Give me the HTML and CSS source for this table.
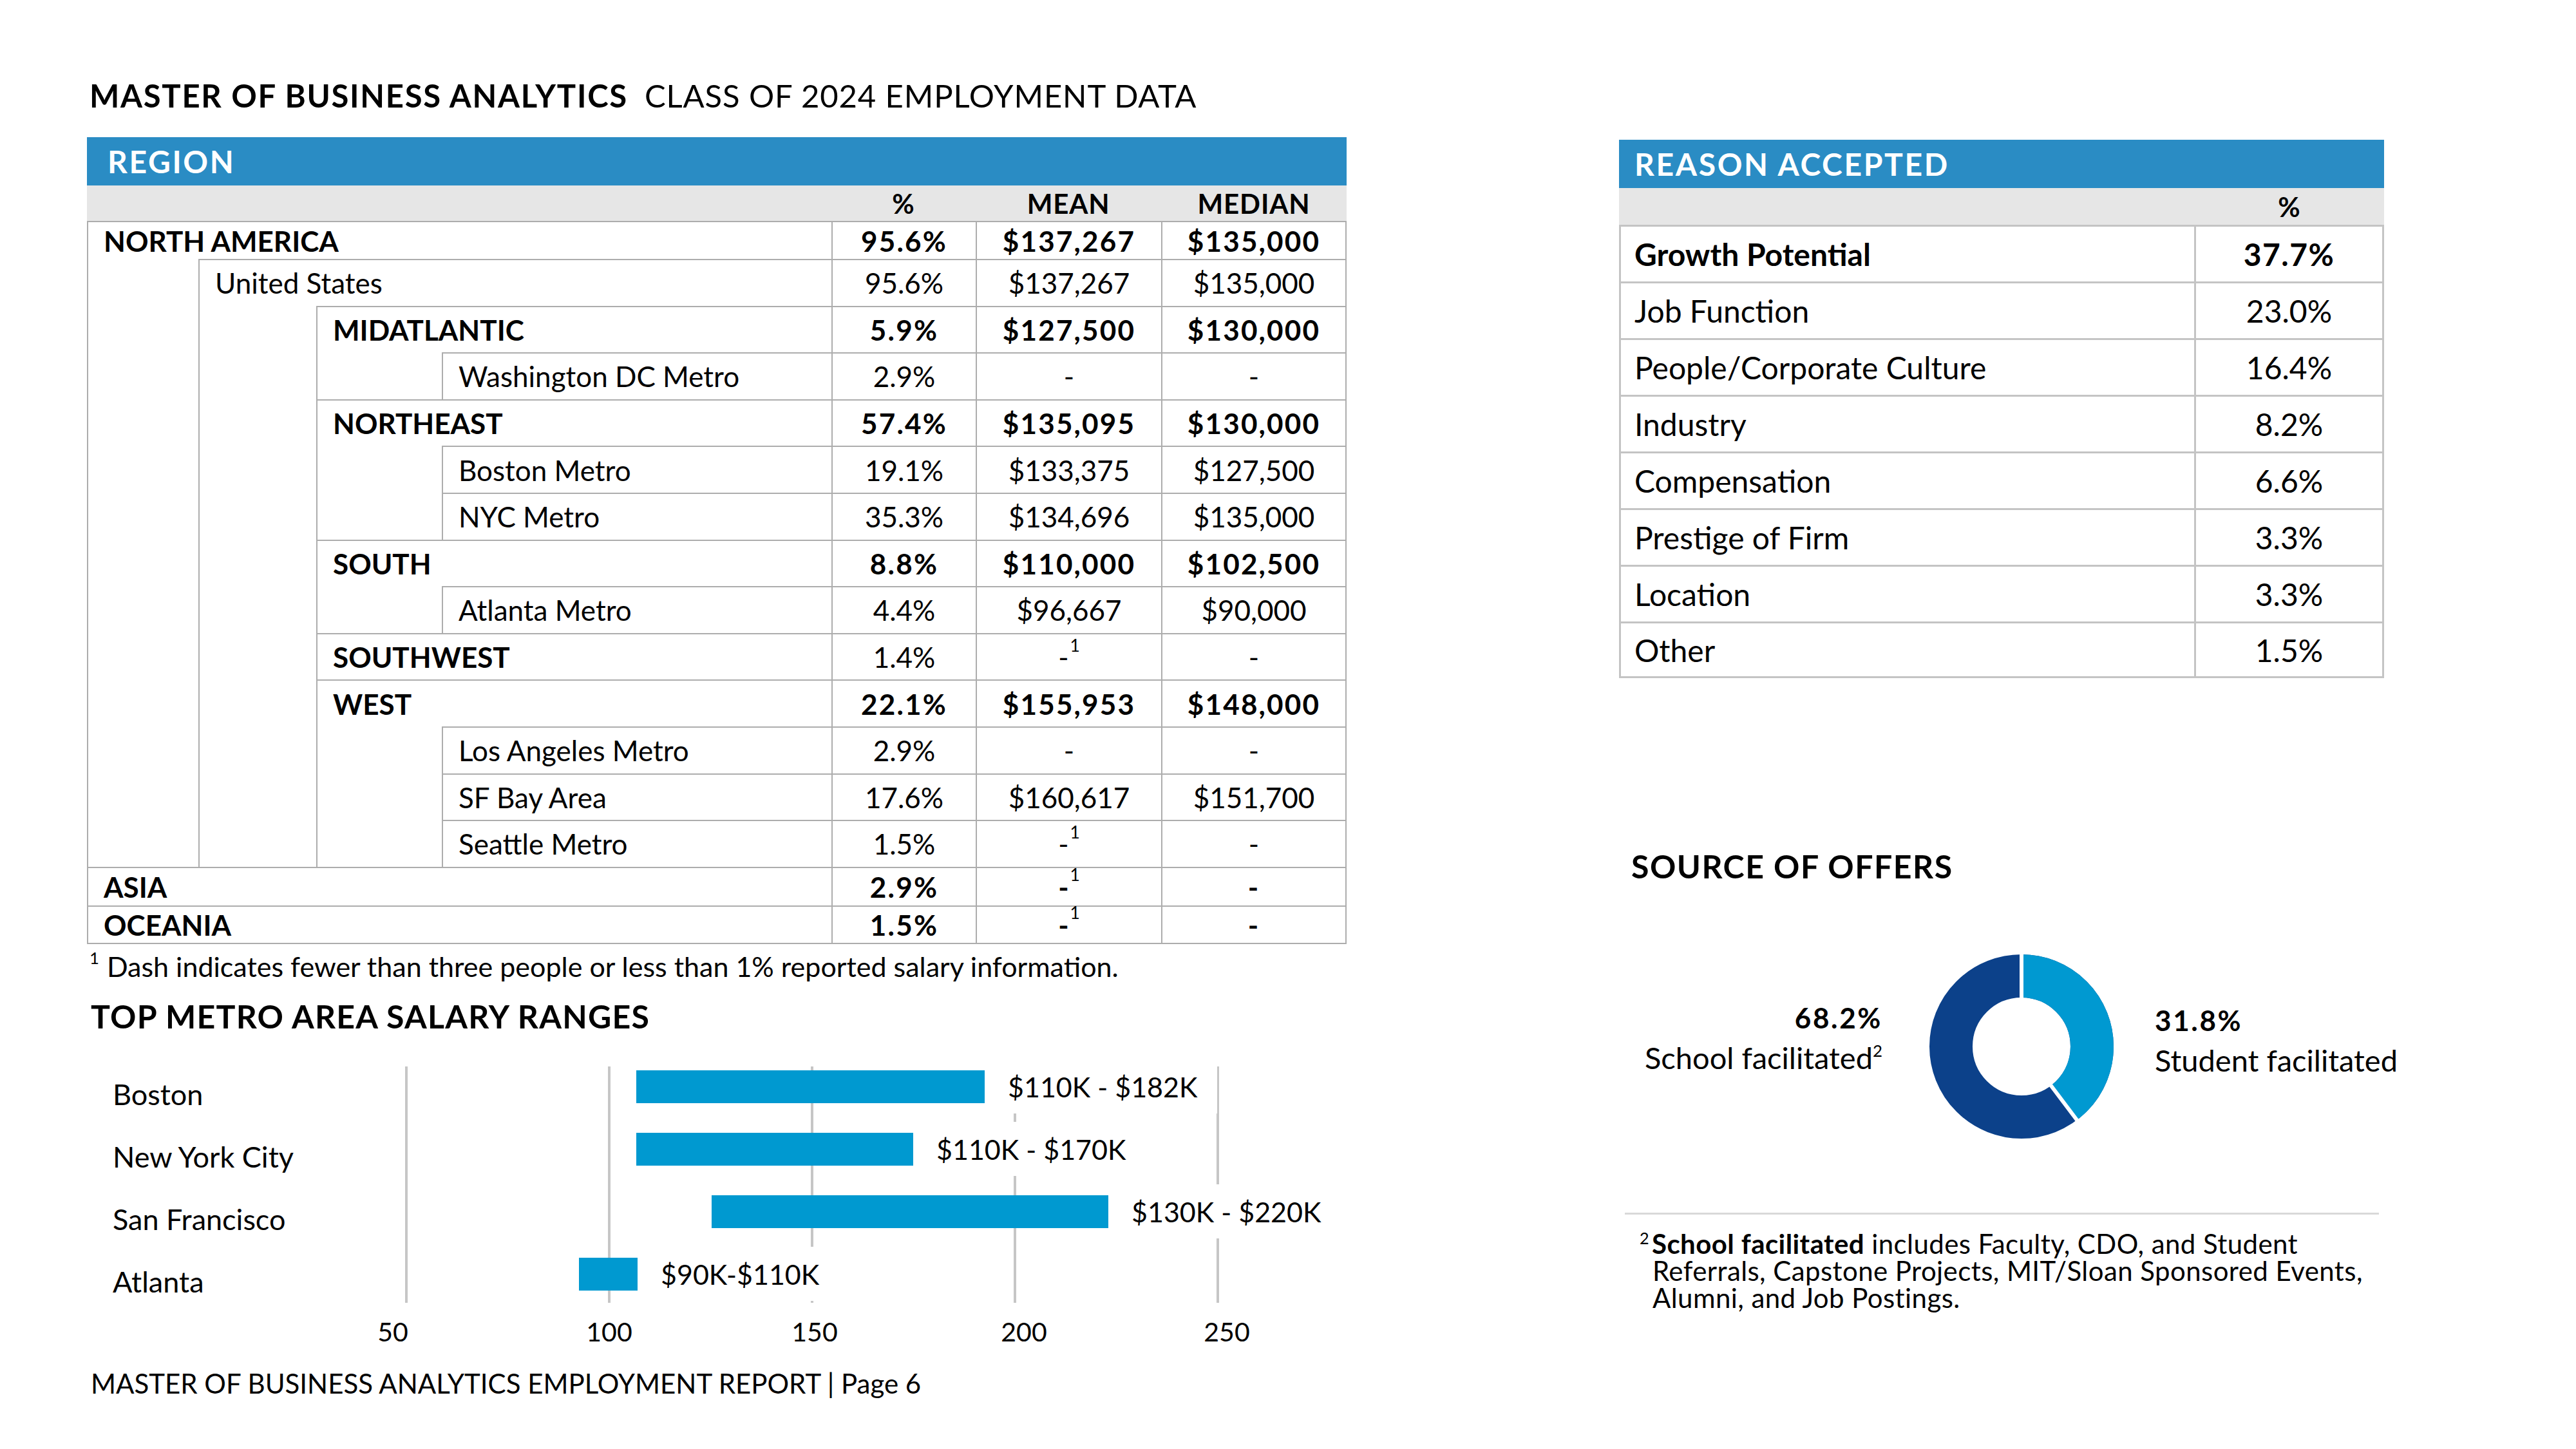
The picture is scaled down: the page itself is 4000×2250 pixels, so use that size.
FILE: index.html
```html
<!DOCTYPE html>
<html>
<head>
<meta charset="utf-8">
<link rel="stylesheet" href="styles.css">
</head>
<body>
<div class="page">
  <div class="col-left">
    <div class="doc-title"><span class="b">MASTER OF BUSINESS ANALYTICS</span><span class="reg">CLASS OF 2024 EMPLOYMENT DATA</span></div>
    <div class="bar">REGION</div>
    <div class="rtable">
      <div class="hd s4"></div><div class="hd">%</div><div class="hd">MEAN</div><div class="hd">MEDIAN</div>

      <div class="c lab s4 b">NORTH AMERICA</div><div class="c v bv">95.6%</div><div class="c v bv">$137,267</div><div class="c v bv end">$135,000</div>

      <div class="f"></div><div class="c lab s3">United States</div><div class="c v">95.6%</div><div class="c v">$137,267</div><div class="c v end">$135,000</div>

      <div class="f"></div><div class="f"></div><div class="c lab s2 b">MIDATLANTIC</div><div class="c v bv">5.9%</div><div class="c v bv">$127,500</div><div class="c v bv end">$130,000</div>

      <div class="f"></div><div class="f"></div><div class="f"></div><div class="c lab">Washington DC Metro</div><div class="c v">2.9%</div><div class="c v">-</div><div class="c v end">-</div>

      <div class="f"></div><div class="f"></div><div class="c lab s2 b">NORTHEAST</div><div class="c v bv">57.4%</div><div class="c v bv">$135,095</div><div class="c v bv end">$130,000</div>

      <div class="f"></div><div class="f"></div><div class="f"></div><div class="c lab">Boston Metro</div><div class="c v">19.1%</div><div class="c v">$133,375</div><div class="c v end">$127,500</div>

      <div class="f"></div><div class="f"></div><div class="f"></div><div class="c lab">NYC Metro</div><div class="c v">35.3%</div><div class="c v">$134,696</div><div class="c v end">$135,000</div>

      <div class="f"></div><div class="f"></div><div class="c lab s2 b">SOUTH</div><div class="c v bv">8.8%</div><div class="c v bv">$110,000</div><div class="c v bv end">$102,500</div>

      <div class="f"></div><div class="f"></div><div class="f"></div><div class="c lab">Atlanta Metro</div><div class="c v">4.4%</div><div class="c v">$96,667</div><div class="c v end">$90,000</div>

      <div class="f"></div><div class="f"></div><div class="c lab s2 b">SOUTHWEST</div><div class="c v">1.4%</div><div class="c v">-<span class="sup">1</span></div><div class="c v end">-</div>

      <div class="f"></div><div class="f"></div><div class="c lab s2 b">WEST</div><div class="c v bv">22.1%</div><div class="c v bv">$155,953</div><div class="c v bv end">$148,000</div>

      <div class="f"></div><div class="f"></div><div class="f"></div><div class="c lab">Los Angeles Metro</div><div class="c v">2.9%</div><div class="c v">-</div><div class="c v end">-</div>

      <div class="f"></div><div class="f"></div><div class="f"></div><div class="c lab">SF Bay Area</div><div class="c v">17.6%</div><div class="c v">$160,617</div><div class="c v end">$151,700</div>

      <div class="f"></div><div class="f"></div><div class="f"></div><div class="c lab">Seattle Metro</div><div class="c v">1.5%</div><div class="c v">-<span class="sup">1</span></div><div class="c v end">-</div>

      <div class="c lab s4 b">ASIA</div><div class="c v bv">2.9%</div><div class="c v"><span class="b">-</span><span class="sup">1</span></div><div class="c v bv end">-</div>

      <div class="c lab s4 b last">OCEANIA</div><div class="c v bv last">1.5%</div><div class="c v last"><span class="b">-</span><span class="sup">1</span></div><div class="c v bv end last">-</div>
    </div>
    <div class="note1"><span class="sup1">1</span>Dash indicates fewer than three people or less than 1% reported salary information.</div>
    <div class="sec-title">TOP METRO AREA SALARY RANGES</div>
    <div class="chart">
      <div class="cats">
        <div class="cat">Boston</div>
        <div class="cat">New York City</div>
        <div class="cat">San Francisco</div>
        <div class="cat">Atlanta</div>
      </div>
      <div class="plot">
        <div class="gline" style="left:31px"></div>
        <div class="gline" style="left:346px"></div>
        <div class="gline" style="left:661px"></div>
        <div class="gline" style="left:976px"></div>
        <div class="gline" style="left:1291px"></div>
        <div class="crow"><div class="cbar" style="margin-left:388px;width:541px"></div><div class="clabel">$110K - $182K</div></div>
        <div class="crow"><div class="cbar" style="margin-left:388px;width:430px"></div><div class="clabel">$110K - $170K</div></div>
        <div class="crow"><div class="cbar" style="margin-left:505px;width:616px"></div><div class="clabel">$130K - $220K</div></div>
        <div class="crow"><div class="cbar" style="margin-left:299px;width:91px"></div><div class="clabel">$90K-$110K</div></div>
      </div>
    </div>
    <div class="axis">
      <span style="left:10px">50</span>
      <span style="left:346px">100</span>
      <span style="left:665px">150</span>
      <span style="left:990px">200</span>
      <span style="left:1305px">250</span>
    </div>
    <div class="footer">MASTER OF BUSINESS ANALYTICS EMPLOYMENT REPORT | Page 6</div>
  </div>

  <div class="col-right">
    <div class="bar bar-r">REASON ACCEPTED</div>
    <div class="atable">
      <div class="ahd"></div><div class="ahd">%</div>
      <div class="a al b">Growth Potential</div><div class="a av b abv aend">37.7%</div>
      <div class="a al">Job Function</div><div class="a av aend">23.0%</div>
      <div class="a al">People/Corporate Culture</div><div class="a av aend">16.4%</div>
      <div class="a al">Industry</div><div class="a av aend">8.2%</div>
      <div class="a al">Compensation</div><div class="a av aend">6.6%</div>
      <div class="a al">Prestige of Firm</div><div class="a av aend">3.3%</div>
      <div class="a al">Location</div><div class="a av aend">3.3%</div>
      <div class="a al alast">Other</div><div class="a av aend alast">1.5%</div>
    </div>
    <div class="src-title">SOURCE OF OFFERS</div>
    <div class="donut-row">
      <div class="dl">
        <div class="pct">68.2%</div>
        <div class="lbl">School facilitated<span class="sup2">2</span></div>
      </div>
      <svg class="donut" width="286" height="286" viewBox="0 0 286 286">
        <circle cx="143" cy="143" r="109.5" fill="none" stroke="#0c418a" stroke-width="67"/>
        <circle cx="143" cy="143" r="109.5" fill="none" stroke="#0099d1" stroke-width="67" stroke-dasharray="273.3 700" transform="rotate(-90 143 143)"/>
        <line x1="143" y1="70" x2="143" y2="-2" stroke="#fff" stroke-width="6"/>
        <line x1="186.9" y1="201.3" x2="232.1" y2="261.2" stroke="#fff" stroke-width="6"/>
      </svg>
      <div class="dr">
        <div class="pct">31.8%</div>
        <div class="lbl">Student facilitated</div>
      </div>
    </div>
    <div class="sep"></div>
    <div class="note2">
      <div class="nl"><span class="sup3">2</span><span class="b">School facilitated</span> includes Faculty, CDO, and Student</div>
      <div class="nl ind">Referrals, Capstone Projects, MIT/Sloan Sponsored Events,</div>
      <div class="nl ind">Alumni, and Job Postings.</div>
    </div>
  </div>
</div>
</body>
</html>
```

FILE: styles.css
```css
html, body {
  margin: 0;
  padding: 0;
  background: #ffffff;
}
body {
  font-family: Lato, "Open Sans", "Liberation Sans", sans-serif;
  color: #000;
}
.page {
  width: 4000px;
  height: 2250px;
  box-sizing: border-box;
  padding-left: 135px;
  display: grid;
  grid-template-columns: 1956px 1188px;
  column-gap: 423px;
  align-items: start;
}
.b { font-weight: 700; }

.col-left {
  padding-top: 110px;
  display: flex;
  flex-direction: column;
}
.doc-title {
  height: 75px;
  display: flex;
  align-items: center;
  padding-left: 4px;
  font-size: 49px;
  white-space: nowrap;
}
.doc-title .b { font-weight: 700; letter-spacing: 0.035em; }
.doc-title .reg { margin-left: 26px; letter-spacing: 0.018em; }

.bar {
  height: 75px;
  box-sizing: border-box;
  margin-top: 28px;
  background: #2a8cc4;
  color: #fff;
  font-weight: 700;
  font-size: 48px;
  letter-spacing: 0.055em;
  display: flex;
  align-items: center;
  padding-left: 32px;
}

/* region table */
.rtable {
  display: grid;
  grid-template-columns: 173px 183px 195px 605px 224px 288px 288px;
  grid-template-rows: 55px 59px repeat(13, 72.6px) 60px 60px;
  font-size: 44px;
}
.hd {
  background: #e6e6e6;
  font-weight: 700;
  font-size: 42px;
  letter-spacing: 0.02em;
  display: flex;
  align-items: center;
  justify-content: center;
}
.s4 { grid-column: span 4; }
.s3 { grid-column: span 3; }
.s2 { grid-column: span 2; }
.c {
  box-sizing: border-box;
  border-left: 2px solid #adadad;
  border-top: 2px solid #adadad;
  display: flex;
  align-items: center;
  white-space: nowrap;
}
.f {
  border-left: 2px solid #adadad;
}
.lab { padding-left: 24px; }
.v { justify-content: center; }
.bv { font-weight: 700; letter-spacing: 0.05em; }
.end { border-right: 2px solid #adadad; }
.last { border-bottom: 2px solid #adadad; }
.sup {
  font-size: 0.6em;
  font-weight: 400;
  position: relative;
  top: -0.7em;
  margin-left: 2px;
}

.note1 {
  height: 70px;
  display: flex;
  align-items: center;
  padding-left: 4px;
  font-size: 43px;
  white-space: nowrap;
}
.sup1 {
  font-size: 0.6em;
  position: relative;
  top: -0.55em;
  margin-right: 12px;
}

.sec-title {
  margin-top: 7px;
  height: 70px;
  display: flex;
  align-items: center;
  padding-left: 6px;
  font-size: 50px;
  font-weight: 700;
  letter-spacing: 0.025em;
}

/* chart */
.chart {
  margin-top: 26px;
  display: grid;
  grid-template-columns: 465px 1491px;
}
.cat {
  height: 97px;
  box-sizing: border-box;
  padding-left: 40px;
  padding-top: 24px;
  display: flex;
  align-items: center;
  font-size: 45px;
}
.plot {
  position: relative;
}
.gline {
  position: absolute;
  top: 17px;
  bottom: 4px;
  width: 4px;
  margin-left: -2px;
  background: #c6c6c6;
  z-index: 0;
}
.crow {
  position: relative;
  z-index: 1;
  height: 97px;
  display: flex;
  align-items: center;
}
.cbar {
  flex: none;
  height: 51px;
  background: #0099d0;
}
.clabel {
  flex: none;
  height: 84px;
  box-sizing: border-box;
  background: #fff;
  display: flex;
  align-items: center;
  padding: 0 30px 0 36px;
  font-size: 43px;
  white-space: nowrap;
}
.axis {
  position: relative;
  margin-top: 11px;
  margin-left: 465px;
  height: 70px;
  font-size: 41px;
}
.axis span {
  position: absolute;
  top: 0;
  line-height: 60px;
  transform: translateX(-50%);
}
.footer {
  margin-top: 10px;
  height: 60px;
  display: flex;
  align-items: center;
  padding-left: 6px;
  font-size: 42px;
  white-space: nowrap;
}

/* right column */
.col-right {
  padding-top: 217px;
  display: flex;
  flex-direction: column;
}
.bar-r {
  margin-top: 0;
  padding-left: 24px;
}
.atable {
  display: grid;
  grid-template-columns: 893px 295px;
  grid-template-rows: 57px repeat(8, 88px);
  font-size: 48px;
}
.ahd {
  background: #e6e6e6;
  font-weight: 700;
  font-size: 42px;
  display: flex;
  align-items: center;
  justify-content: center;
}
.a {
  box-sizing: border-box;
  border-left: 3px solid #c4c4c4;
  border-top: 3px solid #c4c4c4;
  display: flex;
  align-items: center;
  white-space: nowrap;
}
.al { padding-left: 21px; }
.av { justify-content: center; }
.abv { letter-spacing: 0.03em; }
.aend { border-right: 3px solid #c4c4c4; }
.alast { border-bottom: 3px solid #c4c4c4; }

.src-title {
  margin-top: 257px;
  height: 70px;
  display: flex;
  align-items: center;
  padding-left: 19px;
  font-size: 50px;
  font-weight: 700;
  letter-spacing: 0.03em;
}
.donut-row {
  margin-top: 102px;
  height: 286px;
  display: flex;
  align-items: center;
}
.dl {
  width: 409px;
  flex: none;
  text-align: right;
  padding-bottom: 20px;
}
.dr {
  margin-left: 64px;
  padding-bottom: 20px;
}
.donut {
  flex: none;
  margin-left: 73px;
  display: block;
}
.pct {
  font-weight: 700;
  font-size: 44px;
  letter-spacing: 0.06em;
  line-height: 62px;
}
.lbl {
  font-size: 47px;
  line-height: 62px;
  white-space: nowrap;
}
.sup2 {
  font-size: 0.55em;
  position: relative;
  top: -0.75em;
}
.sep {
  margin-top: 115px;
  margin-left: 9px;
  width: 1171px;
  height: 3px;
  background: #d9d9d9;
}
.note2 {
  margin-top: 24px;
  padding-left: 32px;
  font-size: 42px;
  letter-spacing: 0.01em;
}
.nl {
  height: 42px;
  line-height: 42px;
  white-space: nowrap;
}
.ind { padding-left: 20px; }
.sup3 {
  font-size: 0.6em;
  position: relative;
  top: -0.6em;
  margin-right: 4px;
}
```
